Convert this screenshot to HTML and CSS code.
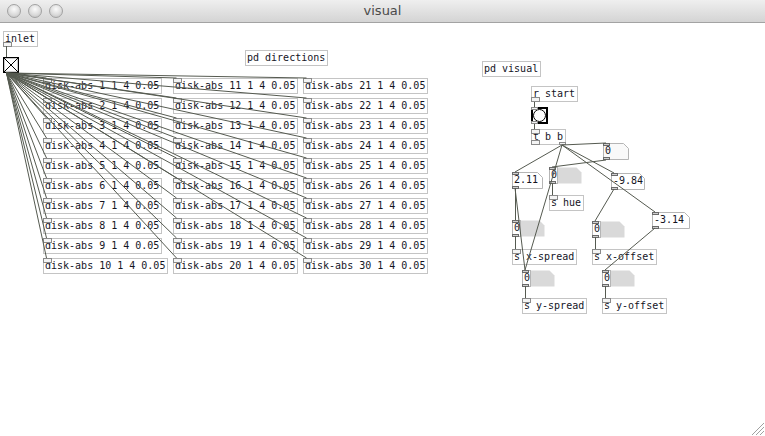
FILE: index.html
```
<!DOCTYPE html>
<html>
<head>
<meta charset="utf-8">
<title>visual</title>
<link rel="stylesheet" href="styles.css">
</head>
<body>
<div class="window">
  <div class="titlebar">
    <div class="lights"><span class="light"></span><span class="light"></span><span class="light"></span></div>
    <div class="title">visual</div>
    <div></div>
  </div>
  <div class="canvas">
    <div class="box node out" style="left:3px;top:8px">inlet</div>
    <div class="xbang node" style="left:3px;top:34px">
      <svg width="16" height="16" viewBox="0 0 16 16"><rect x="0.5" y="0.5" width="15" height="15" fill="#fff" stroke="#000" stroke-width="1.4"/><path d="M1 1L15 15M15 1L1 15" stroke="#000" stroke-width="1"/></svg>
    </div>

    <div class="grid">
      <div class="box in">disk-abs 1 1 4 0.05</div>
      <div class="box in">disk-abs 2 1 4 0.05</div>
      <div class="box in">disk-abs 3 1 4 0.05</div>
      <div class="box in">disk-abs 4 1 4 0.05</div>
      <div class="box in">disk-abs 5 1 4 0.05</div>
      <div class="box in">disk-abs 6 1 4 0.05</div>
      <div class="box in">disk-abs 7 1 4 0.05</div>
      <div class="box in">disk-abs 8 1 4 0.05</div>
      <div class="box in">disk-abs 9 1 4 0.05</div>
      <div class="box in">disk-abs 10 1 4 0.05</div>
      <div class="box in">disk-abs 11 1 4 0.05</div>
      <div class="box in">disk-abs 12 1 4 0.05</div>
      <div class="box in">disk-abs 13 1 4 0.05</div>
      <div class="box in">disk-abs 14 1 4 0.05</div>
      <div class="box in">disk-abs 15 1 4 0.05</div>
      <div class="box in">disk-abs 16 1 4 0.05</div>
      <div class="box in">disk-abs 17 1 4 0.05</div>
      <div class="box in">disk-abs 18 1 4 0.05</div>
      <div class="box in">disk-abs 19 1 4 0.05</div>
      <div class="box in">disk-abs 20 1 4 0.05</div>
      <div class="box in">disk-abs 21 1 4 0.05</div>
      <div class="box in">disk-abs 22 1 4 0.05</div>
      <div class="box in">disk-abs 23 1 4 0.05</div>
      <div class="box in">disk-abs 24 1 4 0.05</div>
      <div class="box in">disk-abs 25 1 4 0.05</div>
      <div class="box in">disk-abs 26 1 4 0.05</div>
      <div class="box in">disk-abs 27 1 4 0.05</div>
      <div class="box in">disk-abs 28 1 4 0.05</div>
      <div class="box in">disk-abs 29 1 4 0.05</div>
      <div class="box in">disk-abs 30 1 4 0.05</div>
    </div>

    <div class="box node" style="left:245px;top:27px">pd directions</div>
    <div class="box node" style="left:482px;top:38px">pd visual</div>
    <div class="box node out" style="left:531px;top:63px">r start</div>
    <div class="bng node" style="left:531px;top:84px"><span class="circle"></span><span class="tab tab-in"></span><span class="tab tab-out"></span></div>
    <div class="box node in out" style="left:531px;top:106px">t b b<span class="tab tab-out-r"></span></div>

    <div class="num node" style="left:603px;top:120px;width:26px">
      <svg class="flag" width="26" height="17" viewBox="0 0 26 17"><path d="M0.5 0.5H20.5L25.5 5.5V16.5H0.5Z" fill="#f9f9f9" stroke="#b5b5b5"/></svg>
      <span class="val">0</span><span class="tab tab-in"></span><span class="tab tab-out"></span>
    </div>
    <div class="num node" style="left:512px;top:149px;width:31px">
      <svg class="flag" width="31" height="17" viewBox="0 0 31 17"><path d="M0.5 0.5H25.5L30.5 5.5V16.5H0.5Z" fill="#fff" stroke="#b5b5b5"/></svg>
      <span class="val">2.11</span><span class="tab tab-in"></span><span class="tab tab-out"></span>
    </div>
    <div class="num node" style="left:611px;top:150px;width:34px">
      <svg class="flag" width="34" height="17" viewBox="0 0 34 17"><path d="M0.5 0.5H28.5L33.5 5.5V16.5H0.5Z" fill="#fff" stroke="#b5b5b5"/></svg>
      <span class="val">-9.84</span><span class="tab tab-in"></span><span class="tab tab-out"></span>
    </div>
    <div class="num node" style="left:652px;top:189px;width:38px">
      <svg class="flag" width="38" height="17" viewBox="0 0 38 17"><path d="M0.5 0.5H32.5L37.5 5.5V16.5H0.5Z" fill="#fff" stroke="#b5b5b5"/></svg>
      <span class="val">-3.14</span><span class="tab tab-in"></span><span class="tab tab-out"></span>
    </div>

    <div class="num node" style="left:549px;top:144px;width:33px">
      <svg class="flag" width="33" height="17" viewBox="0 0 33 17"><path d="M7 0.5H27.5L32.5 5.5V16.5H7Z" fill="#d9d9d9"/><rect x="0.5" y="0.5" width="8" height="16" fill="#fff" stroke="#b5b5b5"/></svg>
      <span class="val">0</span><span class="tab tab-in"></span><span class="tab tab-out"></span>
    </div>
    <div class="box node in" style="left:549px;top:172px">s hue</div>

    <div class="num node" style="left:512px;top:197px;width:33px">
      <svg class="flag" width="33" height="17" viewBox="0 0 33 17"><path d="M7 0.5H27.5L32.5 5.5V16.5H7Z" fill="#d9d9d9"/><rect x="0.5" y="0.5" width="8" height="16" fill="#fff" stroke="#b5b5b5"/></svg>
      <span class="val">0</span><span class="tab tab-in"></span><span class="tab tab-out"></span>
    </div>
    <div class="box node in" style="left:512px;top:226px">s x-spread</div>

    <div class="num node" style="left:592px;top:198px;width:33px">
      <svg class="flag" width="33" height="17" viewBox="0 0 33 17"><path d="M7 0.5H27.5L32.5 5.5V16.5H7Z" fill="#d9d9d9"/><rect x="0.5" y="0.5" width="8" height="16" fill="#fff" stroke="#b5b5b5"/></svg>
      <span class="val">0</span><span class="tab tab-in"></span><span class="tab tab-out"></span>
    </div>
    <div class="box node in" style="left:592px;top:226px">s x-offset</div>

    <div class="num node" style="left:522px;top:247px;width:33px">
      <svg class="flag" width="33" height="17" viewBox="0 0 33 17"><path d="M7 0.5H27.5L32.5 5.5V16.5H7Z" fill="#d9d9d9"/><rect x="0.5" y="0.5" width="8" height="16" fill="#fff" stroke="#b5b5b5"/></svg>
      <span class="val">0</span><span class="tab tab-in"></span><span class="tab tab-out"></span>
    </div>
    <div class="box node in" style="left:522px;top:275px">s y-spread</div>

    <div class="num node" style="left:602px;top:247px;width:33px">
      <svg class="flag" width="33" height="17" viewBox="0 0 33 17"><path d="M7 0.5H27.5L32.5 5.5V16.5H7Z" fill="#d9d9d9"/><rect x="0.5" y="0.5" width="8" height="16" fill="#fff" stroke="#b5b5b5"/></svg>
      <span class="val">0</span><span class="tab tab-in"></span><span class="tab tab-out"></span>
    </div>
    <div class="box node in" style="left:602px;top:275px">s y-offset</div>

    <svg class="wires" width="765" height="413" viewBox="0 23 765 413">
      <g fill="none" stroke="#555a50" stroke-width="1">
        <path d="M6.5 46V57"/>
        <path d="M6.5 73L46.5 78M6.5 73L46.5 98M6.5 73L46.5 118M6.5 73L46.5 138M6.5 73L46.5 158M6.5 73L46.5 178M6.5 73L46.5 198M6.5 73L46.5 218M6.5 73L46.5 238M6.5 73L46.5 258"/>
        <path d="M6.5 73L176.5 78M6.5 73L176.5 98M6.5 73L176.5 118M6.5 73L176.5 138M6.5 73L176.5 158M6.5 73L176.5 178M6.5 73L176.5 198M6.5 73L176.5 218M6.5 73L176.5 238M6.5 73L176.5 258"/>
        <path d="M6.5 73L306.5 78M6.5 73L306.5 98M6.5 73L306.5 118M6.5 73L306.5 138M6.5 73L306.5 158M6.5 73L306.5 178M6.5 73L306.5 198M6.5 73L306.5 218M6.5 73L306.5 238M6.5 73L306.5 258"/>
        <path d="M534.5 102V107M534.5 124V129"/>
        <path d="M562 145L606 143M562 145L515 172M562 145L525 270M562 145L614 173M562 145L655 212"/>
        <path d="M606 160L552 167M552.5 183V195"/>
        <path d="M515.5 188V220M515 188L525 270M515.5 236V249"/>
        <path d="M614 189L595 221M595.5 237V249"/>
        <path d="M655 228L605 270M605.5 286V298M525.5 286V298"/>
      </g>
      <g stroke="#a0a0a0" stroke-width="1">
        <path d="M752 435L764 423M756 435L764 427M760 435L764 431"/>
      </g>
    </svg>
  </div>
</div>
</body>
</html>
```
FILE: styles.css
```
* { box-sizing: border-box; }
html, body { margin: 0; padding: 0; }
body {
  width: 765px;
  height: 436px;
  overflow: hidden;
  background: #fff;
  font-family: "DejaVu Sans Mono", "Liberation Mono", monospace;
}
.window {
  display: flex;
  flex-direction: column;
  width: 765px;
  height: 436px;
}
.titlebar {
  flex: none;
  height: 23px;
  display: grid;
  grid-template-columns: 1fr auto 1fr;
  align-items: center;
  background: linear-gradient(#efefef, #d4d4d4);
  border-bottom: 1px solid #a3a3a3;
}
.lights {
  display: flex;
  gap: 7px;
  padding-left: 7px;
}
.light {
  width: 14px;
  height: 14px;
  border-radius: 50%;
  border: 1px solid #a2a2a2;
  background: radial-gradient(circle at 50% 35%, #fbfbfb 0%, #dcdcdc 55%, #bdbdbd 100%);
}
.title {
  font-family: "DejaVu Sans", "Liberation Sans", sans-serif;
  font-size: 13px;
  color: #4a4a4a;
  line-height: 22px;
}
.canvas {
  flex: 1;
  position: relative;
  background: #fff;
}
.box {
  position: relative;
  height: 16px;
  border: 1px solid #c4c4c4;
  padding: 0 2px 0 1px;
  font-size: 10px;
  line-height: 14px;
  color: #15151f;
  white-space: nowrap;
  background: #fff;
  width: max-content;
}
.node { position: absolute; }
.in::before, .out::after, .tab {
  content: "";
  position: absolute;
  left: -1px;
  width: 7px;
  height: 3px;
  border: 1px solid #8a8a8a;
  background: #f4f4f4;
}
.in::before { top: -1px; }
.out::after { bottom: -1px; }
.num .tab { border-color: #6a6a6a; background: #cfcfcf; }
.tab-in { top: 0; left: 0; }
.tab-out { bottom: 0; left: 0; }
.box .tab-out-r { bottom: -1px; left: auto; right: -1px; }
.grid {
  position: absolute;
  left: 43px;
  top: 55px;
  display: grid;
  grid-template-columns: repeat(3, 130px);
  grid-template-rows: repeat(10, 16px);
  grid-auto-flow: column;
  row-gap: 4px;
}
.xbang { width: 16px; height: 16px; }
.xbang svg { display: block; }
.bng {
  width: 17px;
  height: 17px;
  border: 2px solid #000;
  background: #fff;
  padding: 0;
}
.bng .circle {
  position: absolute;
  inset: 0;
  border: 1px solid #000;
  border-radius: 50%;
}
.bng .tab-in { top: -2px; left: -2px; }
.bng .tab-out { bottom: -2px; left: -2px; }
.num {
  height: 17px;
  font-size: 10px;
  line-height: 15px;
  color: #15151f;
  white-space: nowrap;
}
.num .flag {
  position: absolute;
  left: 0;
  top: 0;
  display: block;
}
.num .val {
  position: relative;
  padding-left: 2px;
  line-height: 16px;
}
.wires {
  position: absolute;
  left: 0;
  top: 0;
  pointer-events: none;
}
```
